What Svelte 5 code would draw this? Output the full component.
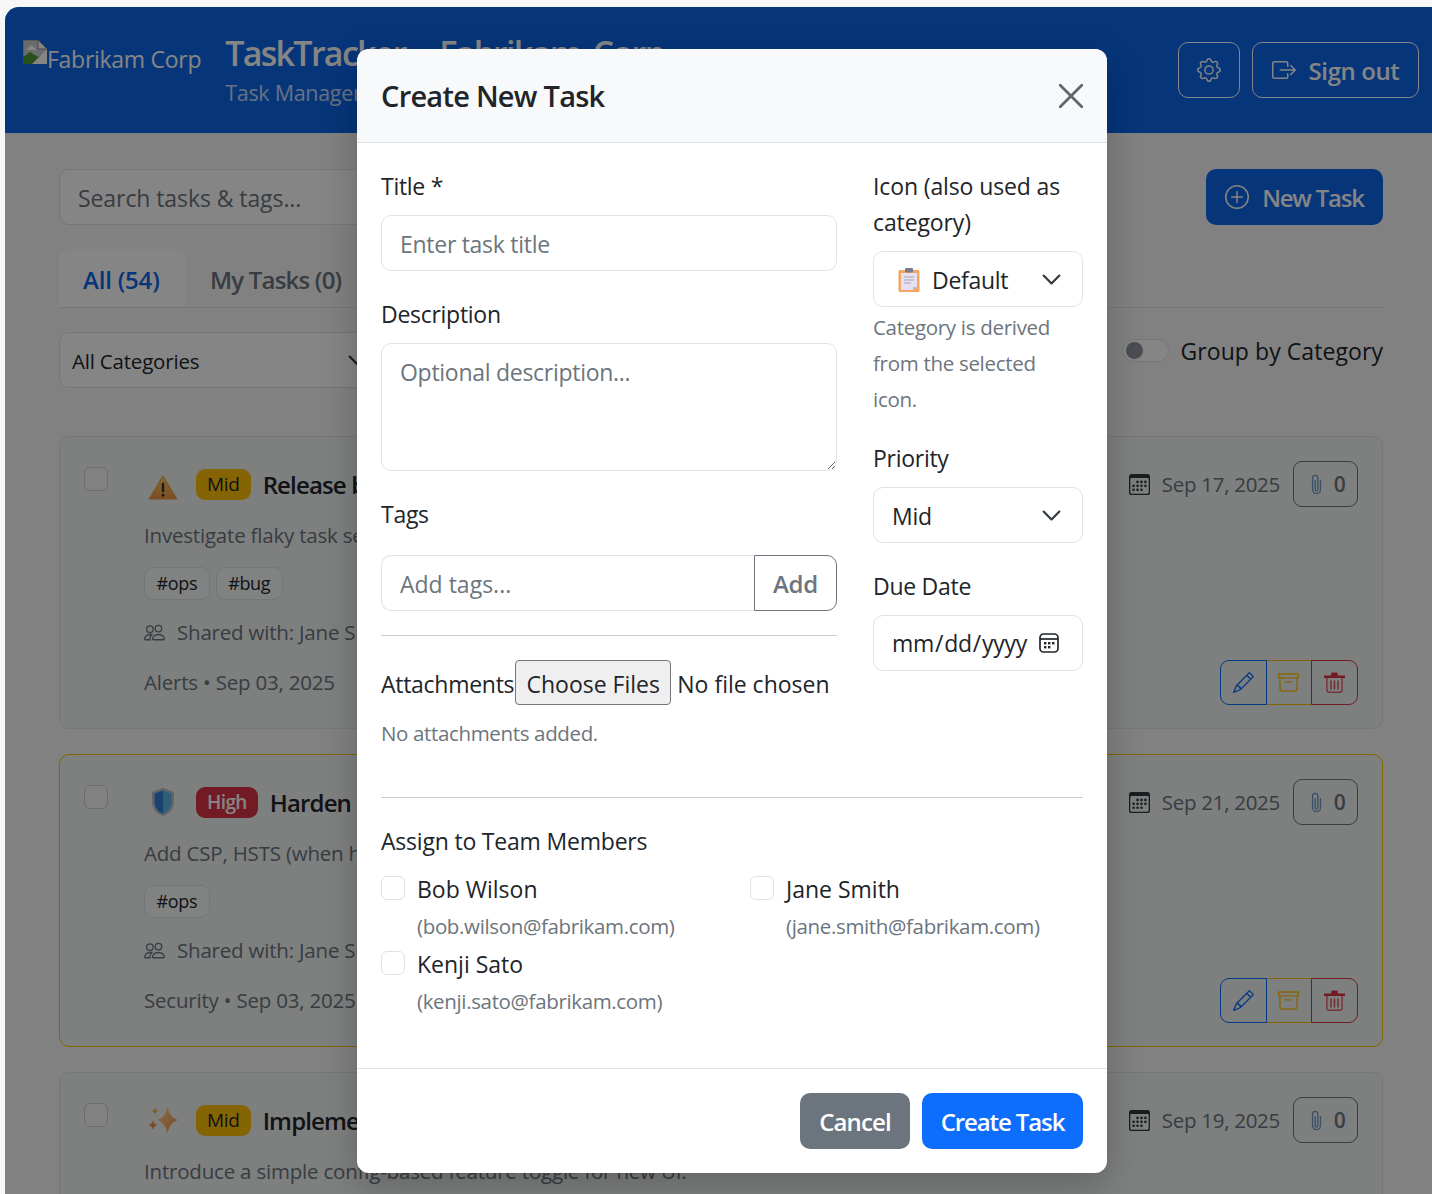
<script>
  const tasks = [
    { icon: 'warn', pr: 'Mid', title: 'Release blockers triage', desc: 'Investigate flaky task search results in production.', tags: ['#ops', '#bug'], meta: 'Alerts • Sep 03, 2025', due: 'Sep 17, 2025', high: false },
    { icon: 'shield', pr: 'High', title: 'Harden security headers', desc: 'Add CSP, HSTS (when hosted over TLS) and referrer policy.', tags: ['#ops'], meta: 'Security • Sep 03, 2025', due: 'Sep 21, 2025', high: true },
    { icon: 'spark', pr: 'Mid', title: 'Implement feature flags', desc: 'Introduce a simple config-based feature toggle for new UI.', tags: ['#ui'], meta: 'Feature • Sep 03, 2025', due: 'Sep 19, 2025', high: false }
  ];
  const members = [
    { name: 'Bob Wilson', email: '(bob.wilson@fabrikam.com)' },
    { name: 'Jane Smith', email: '(jane.smith@fabrikam.com)' },
    { name: 'Kenji Sato', email: '(kenji.sato@fabrikam.com)' }
  ];
</script>

<div class="shell">
  <header class="top">
    <div class="brand">
      <span class="logo">
        <svg class="broken" viewBox="0 0 24 24" width="24" height="24">
          <path d="M0 0h15l9 9v15H0z" fill="#c9cdd2" stroke="#8a8f96" stroke-width="1"/>
          <path d="M0 24V17l7-5 8 5 9-5v12z" fill="#4f9a36"/>
          <path d="M3 10l5-5 6 5z" fill="#fff"/>
          <path d="M15 0v9h9z" fill="#fff" stroke="#8a8f96"/>
          <path d="M24 9L9 24h15z" fill="#fff"/>
        </svg>Fabrikam Corp
      </span>
      <div class="brand-text">
        <div class="app-title">TaskTracker - Fabrikam Corp</div>
        <div class="app-sub">Task Management Portal</div>
      </div>
    </div>
    <div class="top-actions">
      <button class="ghost gear" aria-label="Settings">
        <svg viewBox="0 0 16 16" width="24" height="24" fill="currentColor"><path d="M8 4.754a3.246 3.246 0 1 0 0 6.492 3.246 3.246 0 0 0 0-6.492zM5.754 8a2.246 2.246 0 1 1 4.492 0 2.246 2.246 0 0 1-4.492 0z"/><path d="M9.796 1.343c-.527-1.79-3.065-1.79-3.592 0l-.094.319a.873.873 0 0 1-1.255.52l-.292-.16c-1.64-.892-3.433.902-2.54 2.541l.159.292a.873.873 0 0 1-.52 1.255l-.319.094c-1.79.527-1.79 3.065 0 3.592l.319.094a.873.873 0 0 1 .52 1.255l-.16.292c-.892 1.64.901 3.434 2.541 2.54l.292-.159a.873.873 0 0 1 1.255.52l.094.319c.527 1.79 3.065 1.79 3.592 0l.094-.319a.873.873 0 0 1 1.255-.52l.292.16c1.64.893 3.434-.902 2.54-2.541l-.159-.292a.873.873 0 0 1 .52-1.255l.319-.094c1.79-.527 1.79-3.065 0-3.592l-.319-.094a.873.873 0 0 1-.52-1.255l.16-.292c.893-1.64-.902-3.433-2.541-2.54l-.292.159a.873.873 0 0 1-1.255-.52l-.094-.319zm-2.633.283c.246-.835 1.428-.835 1.674 0l.094.319a1.873 1.873 0 0 0 2.693 1.115l.291-.16c.764-.415 1.6.42 1.184 1.185l-.159.292a1.873 1.873 0 0 0 1.116 2.692l.318.094c.835.246.835 1.428 0 1.674l-.319.094a1.873 1.873 0 0 0-1.115 2.693l.16.291c.415.764-.42 1.6-1.185 1.184l-.291-.159a1.873 1.873 0 0 0-2.693 1.116l-.094.318c-.246.835-1.428.835-1.674 0l-.094-.319a1.873 1.873 0 0 0-2.692-1.115l-.292.16c-.764.415-1.6-.42-1.184-1.185l.159-.291A1.873 1.873 0 0 0 1.945 8.93l-.319-.094c-.835-.246-.835-1.428 0-1.674l.319-.094A1.873 1.873 0 0 0 3.06 4.377l-.16-.292c-.415-.764.42-1.6 1.185-1.184l.292.159a1.873 1.873 0 0 0 2.692-1.115l.094-.319z"/></svg>
      </button>
      <button class="ghost signout">
        <svg viewBox="0 0 16 16" width="24" height="24" fill="currentColor"><path d="M10 12.5a.5.5 0 0 1-.5.5h-8a.5.5 0 0 1-.5-.5v-9a.5.5 0 0 1 .5-.5h8a.5.5 0 0 1 .5.5v2a.5.5 0 0 0 1 0v-2A1.5 1.5 0 0 0 9.5 2h-8A1.5 1.5 0 0 0 0 3.5v9A1.5 1.5 0 0 0 1.5 14h8a1.5 1.5 0 0 0 1.5-1.5v-2a.5.5 0 0 0-1 0v2z"/><path d="M15.854 8.354a.5.5 0 0 0 0-.708l-3-3a.5.5 0 0 0-.708.708L14.293 7.5H5.5a.5.5 0 0 0 0 1h8.793l-2.147 2.146a.5.5 0 0 0 .708.708l3-3z"/></svg>
        Sign out
      </button>
    </div>
  </header>

  <main class="page">
    <div class="search-row">
      <div class="search">Search tasks &amp; tags...</div>
      <button class="new-task">
        <svg viewBox="0 0 16 16" width="24" height="24" fill="currentColor"><path d="M8 15A7 7 0 1 1 8 1a7 7 0 0 1 0 14zm0 1A8 8 0 1 0 8 0a8 8 0 0 0 0 16z"/><path d="M8 4a.5.5 0 0 1 .5.5v3h3a.5.5 0 0 1 0 1h-3v3a.5.5 0 0 1-1 0v-3h-3a.5.5 0 0 1 0-1h3v-3A.5.5 0 0 1 8 4z"/></svg>
        New Task
      </button>
    </div>
    <nav class="tabs">
      <span class="tab active">All (54)</span>
      <span class="tab other">My Tasks (0)</span>
    </nav>
    <div class="filters">
      <div class="cat-select">All Categories
        <svg class="chev" viewBox="0 0 16 16" width="21" height="21"><path d="m2 5 6 6 6-6" fill="none" stroke="#343a40" stroke-width="1.7" stroke-linecap="round" stroke-linejoin="round"/></svg>
      </div>
      <div class="group-toggle"><span class="switch"><span class="knob"></span></span>Group by Category</div>
    </div>

    {#each tasks as t}
      <article class="card" class:warn={t.high}>
        <span class="check dim"></span>
        <div class="card-main">
          <div class="title-row">
            <span class="emoji">
              {#if t.icon === 'warn'}
                <svg class="tri" viewBox="0 0 30 26" width="30" height="25"><defs><linearGradient id="wg" x1="0" y1="0" x2="0" y2="1"><stop offset="0" stop-color="#f8cf62"/><stop offset="1" stop-color="#ee9240"/></linearGradient></defs><path d="M15 1 L29.5 25 H0.5 Z" fill="url(#wg)" stroke="#ea9a48" stroke-linejoin="round"/><rect x="13.8" y="8" width="2.4" height="10" rx="1" fill="#333"/><circle cx="15" cy="21" r="1.5" fill="#333"/></svg>
              {:else if t.icon === 'shield'}
                <svg viewBox="0 0 24 30" width="24" height="30"><path d="M12 1 L23 5 V15 C23 22 18 27 12 29 C6 27 1 22 1 15 V5 Z" fill="#b9bec6"/><path d="M12 3.5 L3.5 6.5 V15 C3.5 20.5 7.5 25 12 26.8 Z" fill="#2f7fd6"/><path d="M12 3.5 L20.5 6.5 V15 C20.5 20.5 16.5 25 12 26.8 Z" fill="#57b6e4"/></svg>
              {:else}
                <svg viewBox="0 0 30 28" width="30" height="28"><defs><linearGradient id="sg" x1="0" y1="0" x2="1" y2="1"><stop offset="0" stop-color="#ffd98a"/><stop offset="1" stop-color="#f28a4a"/></linearGradient></defs><path d="M19.5 1 C21.5 9 24 12 30 14 C24 16 21.5 19 19.5 27 C17.5 19 15 16 9 14 C15 12 17.5 9 19.5 1Z" fill="url(#sg)"/><path d="M7 1 C7.6 3.6 8.4 4.4 11 5 C8.4 5.6 7.6 6.4 7 9 C6.4 6.4 5.6 5.6 3 5 C5.6 4.4 6.4 3.6 7 1Z" fill="#f7b858"/><path d="M5 14 C5.8 17.2 6.8 18.2 10 19 C6.8 19.8 5.8 20.8 5 24 C4.2 20.8 3.2 19.8 0 19 C3.2 18.2 4.2 17.2 5 14Z" fill="#f0903f"/></svg>
              {/if}
            </span>
            <span class="badge" class:high={t.pr === 'High'}>{t.pr}</span>
            <span class="task-title">{t.title}</span>
          </div>
          <div class="desc">{t.desc}</div>
          <div class="tags">{#each t.tags as tag}<span class="tag">{tag}</span>{/each}</div>
          <div class="shared">
            <svg viewBox="0 0 16 16" width="21" height="21" fill="currentColor"><path d="M15 14s1 0 1-1-1-4-5-4-5 3-5 4 1 1 1 1h8Zm-7.978-1A.261.261 0 0 1 7 12.996c.001-.264.167-1.03.76-1.72C8.312 10.629 9.282 10 11 10c1.717 0 2.687.63 3.24 1.276.593.69.758 1.457.76 1.72l-.008.002a.274.274 0 0 1-.014.002H7.022ZM11 7a2 2 0 1 0 0-4 2 2 0 0 0 0 4Zm3-2a3 3 0 1 1-6 0 3 3 0 0 1 6 0ZM6.936 9.28a5.88 5.88 0 0 0-1.23-.247A7.35 7.35 0 0 0 5 9c-4 0-5 3-5 4 0 .667.333 1 1 1h4.216A2.238 2.238 0 0 1 5 13c0-1.01.377-2.042 1.09-2.904.243-.294.526-.569.846-.816ZM4.92 10A5.493 5.493 0 0 0 4 13H1c0-.26.164-1.03.76-1.724.545-.636 1.492-1.256 3.16-1.275ZM1.5 5.5a3 3 0 1 1 6 0 3 3 0 0 1-6 0Zm3-2a2 2 0 1 0 0 4 2 2 0 0 0 0-4Z"/></svg>
            Shared with: Jane Smith
          </div>
          <div class="meta">{t.meta}</div>
        </div>
        <div class="card-side">
          <div class="due">
            <svg viewBox="0 0 16 16" width="21" height="21" fill="#343a40"><path d="M14 0H2a2 2 0 0 0-2 2v12a2 2 0 0 0 2 2h12a2 2 0 0 0 2-2V2a2 2 0 0 0-2-2zM1 3.857C1 3.384 1.448 3 2 3h12c.552 0 1 .384 1 .857v10.286c0 .473-.448.857-1 .857H2c-.552 0-1-.384-1-.857V3.857z"/><path d="M6.5 7a1 1 0 1 0 0-2 1 1 0 0 0 0 2zm3 0a1 1 0 1 0 0-2 1 1 0 0 0 0 2zm3 0a1 1 0 1 0 0-2 1 1 0 0 0 0 2zm-9 3a1 1 0 1 0 0-2 1 1 0 0 0 0 2zm3 0a1 1 0 1 0 0-2 1 1 0 0 0 0 2zm3 0a1 1 0 1 0 0-2 1 1 0 0 0 0 2zm3 0a1 1 0 1 0 0-2 1 1 0 0 0 0 2zm-9 3a1 1 0 1 0 0-2 1 1 0 0 0 0 2zm3 0a1 1 0 1 0 0-2 1 1 0 0 0 0 2zm3 0a1 1 0 1 0 0-2 1 1 0 0 0 0 2z"/></svg>
            <span class="due-text">{t.due}</span>
            <button class="attach">
              <svg viewBox="0 0 16 16" width="21" height="21" fill="#6c9ac4"><path d="M4.5 3a2.5 2.5 0 0 1 5 0v9a1.5 1.5 0 0 1-3 0V5a.5.5 0 0 1 1 0v7a.5.5 0 0 0 1 0V3a1.5 1.5 0 1 0-3 0v9a2.5 2.5 0 0 0 5 0V5a.5.5 0 0 1 1 0v7a3.5 3.5 0 1 1-7 0V3z"/></svg>
              0
            </button>
          </div>
          <div class="acts">
            <button class="act edit" aria-label="Edit"><svg viewBox="0 0 16 16" width="21" height="21" fill="currentColor"><path d="M12.146.146a.5.5 0 0 1 .708 0l3 3a.5.5 0 0 1 0 .708l-10 10a.5.5 0 0 1-.168.11l-5 2a.5.5 0 0 1-.65-.65l2-5a.5.5 0 0 1 .11-.168l10-10zM11.207 2.5 13.5 4.793 14.793 3.5 12.5 1.207 11.207 2.5zm1.586 3L10.5 3.207 4 9.707V10h.5a.5.5 0 0 1 .5.5v.5h.5a.5.5 0 0 1 .5.5v.5h.293l6.5-6.5zm-9.761 5.175-.106.106-1.528 3.821 3.821-1.528.106-.106A.5.5 0 0 1 5 12.5V12h-.5a.5.5 0 0 1-.5-.5V11h-.5a.5.5 0 0 1-.468-.325z"/></svg></button>
            <button class="act arch" aria-label="Archive"><svg viewBox="0 0 16 16" width="21" height="21" fill="currentColor"><path d="M0 2a1 1 0 0 1 1-1h14a1 1 0 0 1 1 1v2a1 1 0 0 1-1 1v7.5a2.5 2.5 0 0 1-2.5 2.5h-9A2.5 2.5 0 0 1 1 12.5V5a1 1 0 0 1-1-1V2zm2 3v7.5A1.5 1.5 0 0 0 3.5 14h9a1.5 1.5 0 0 0 1.5-1.5V5H2zm13-3H1v2h14V2zM5 7.5a.5.5 0 0 1 .5-.5h5a.5.5 0 0 1 0 1h-5a.5.5 0 0 1-.5-.5z"/></svg></button>
            <button class="act del" aria-label="Delete"><svg viewBox="0 0 16 16" width="21" height="21"><path d="M0 2.6h16v2H0z M5.5 1.4 6 .4h4l.5 1v1.4h-5z" fill="currentColor"/><path d="M2.2 4.4v9.4c0 1 .7 1.7 1.7 1.7h8.2c1 0 1.7-.7 1.7-1.7V4.4" fill="none" stroke="currentColor" stroke-width="1.1" opacity=".75"/><path d="M5.3 6.5v6.8M8 6.5v6.8M10.7 6.5v6.8" stroke="currentColor" stroke-width="1.1" opacity=".85"/></svg></button>
          </div>
        </div>
      </article>
    {/each}
  </main>

  <div class="backdrop"></div>

  <section class="modal">
    <div class="m-head">
      <h2>Create New Task</h2>
      <button class="x" aria-label="Close">
        <svg viewBox="0 0 24 24" width="24" height="24"><path d="M1 1 23 23M23 1 1 23" stroke="#62666a" stroke-width="2.8" stroke-linecap="round"/></svg>
      </button>
    </div>
    <div class="m-body">
      <div class="form-grid">
        <div class="col-left">
          <label class="lbl" for="t">Title *</label>
          <input id="t" class="ctl" placeholder="Enter task title" />
          <label class="lbl gap" for="d">Description</label>
          <textarea id="d" class="ctl area" placeholder="Optional description..."></textarea>
          <label class="lbl gap tags-lbl" for="g">Tags</label>
          <div class="group">
            <input id="g" class="ctl" placeholder="Add tags..." />
            <button class="add">Add</button>
          </div>
          <hr class="rule" />
          <div class="attach-row">
            <label for="f">Attachments</label><input id="f" class="file" type="file" multiple />
          </div>
          <div class="no-att">No attachments added.</div>
        </div>
        <div class="col-right">
          <div class="lbl icon-lbl">Icon (also used as category)</div>
          <div class="ctl fake">
            <svg viewBox="0 0 22 24" width="22" height="24"><rect x="0.5" y="2" width="21" height="22" rx="1.5" fill="#f0a766"/><path d="M3 5h16v14l-4 3H3z" fill="#e6e0f0"/><path d="M19 19l-4 3v-3z" fill="#bdb4cf"/><rect x="7" y="0" width="8" height="4.5" rx="1" fill="#7f7a8a"/><path d="M6 9h10M6 12h10M6 15h7" stroke="#a8a2b4" stroke-width="1.2"/></svg>
            <span>Default</span>
            <svg class="chev-m" viewBox="0 0 16 16" width="21" height="21"><path d="m2 5 6 6 6-6" fill="none" stroke="#343a40" stroke-width="1.7" stroke-linecap="round" stroke-linejoin="round"/></svg>
          </div>
          <div class="help">Category is derived from the selected icon.</div>
          <div class="lbl prio">Priority</div>
          <div class="ctl fake">
            <span>Mid</span>
            <svg class="chev-m" viewBox="0 0 16 16" width="21" height="21"><path d="m2 5 6 6 6-6" fill="none" stroke="#343a40" stroke-width="1.7" stroke-linecap="round" stroke-linejoin="round"/></svg>
          </div>
          <label class="lbl gap" for="dd">Due Date</label>
          <div class="date-wrap">
            <input id="dd" class="ctl date" type="date" />
            <svg class="date-ic" viewBox="0 0 20 20" width="20" height="20" fill="none"><rect x="1" y="1" width="18" height="18" rx="3.5" stroke="#212529" stroke-width="1.7"/><path d="M1 6h18" stroke="#212529" stroke-width="1.7"/><g fill="#212529"><rect x="5" y="9" width="2.4" height="2.4"/><rect x="9" y="9" width="2.4" height="2.4"/><rect x="13" y="9" width="2.4" height="2.4"/><rect x="5" y="13" width="2.4" height="2.4"/><rect x="9" y="13" width="2.4" height="2.4"/></g></svg>
          </div>
        </div>
      </div>
      <hr class="rule wide" />
      <div class="assign-lbl">Assign to Team Members</div>
      <div class="members">
        {#each members as m}
          <div class="member">
            <span class="check"></span>
            <div>
              <div class="m-name">{m.name}</div>
              <div class="m-mail">{m.email}</div>
            </div>
          </div>
        {/each}
      </div>
    </div>
    <div class="m-foot">
      <button class="btn cancel">Cancel</button>
      <button class="btn create">Create Task</button>
    </div>
  </section>
</div>

<style>
  :global(body) { margin: 0; background: #f7f7f7; overflow: hidden; }
  .shell {
    --fam: "Open Sans", "Noto Sans", sans-serif;
    --blue: #0c67ea;
    position: relative; margin: 7px 0 0 5px; height: 1187px; overflow: hidden;
    border-top-left-radius: 14px; background: #f7f8f9; color: #212529;
    font-family: var(--fam); font-size: 23px; letter-spacing: -0.28px; line-height: 36px;
  }
  button, input, textarea { font-family: inherit; letter-spacing: inherit; }
  svg { flex: none; display: block; }

  .top { height: 126px; background: var(--blue); color: #fff; display: flex; justify-content: space-between; padding: 35px 13px 0 18px; box-sizing: border-box; }
  .brand { display: flex; gap: 24px; }
  .logo { display: flex; align-items: flex-start; height: 36px; line-height: 34px; }
  .broken { margin-top: -2px; }
  .brand-text { margin-top: -13px; }
  .app-title { font-size: 34px; font-weight: 600; line-height: 48px; letter-spacing: -1.7px; word-spacing: 5px; white-space: nowrap; }
  .app-sub { font-size: 21.5px; line-height: 30px; opacity: .75; margin-top: 1px; letter-spacing: -0.3px; white-space: nowrap; }
  .top-actions { display: flex; gap: 12px; }
  .ghost { height: 56px; border: 1px solid #fff; border-radius: 10px; background: transparent; color: #fff; display: flex; align-items: center; justify-content: center; font-size: 24px; font-weight: 600; gap: 13px; padding: 0; box-sizing: border-box; letter-spacing: -0.4px; }
  .gear { width: 62px; }
  .signout { width: 167px; }

  .page { padding: 36px 49px 0 54px; isolation: isolate; }
  .search-row { display: flex; justify-content: space-between; gap: 24px; }
  .search { width: 900px; height: 56px; box-sizing: border-box; border: 1px solid #dee2e6; border-radius: 10px; padding: 10px 18px; color: #6c757d; background: #fff; letter-spacing: -0.08px; }
  .new-task { width: 177px; height: 56px; border: 0; border-radius: 10px; background: var(--blue); color: #fff; font-size: 24px; font-weight: 600; display: flex; align-items: center; justify-content: center; gap: 13px; padding: 0; letter-spacing: -1.2px; }
  .tabs { margin-top: 24px; display: flex; border-bottom: 1px solid #dee2e6; height: 58px; }
  .tab { width: 127px; height: 58px; box-sizing: border-box; padding: 13px 24px; font-size: 24px; font-weight: 600; color: #6c757d; border-radius: 10px 10px 0 0; white-space: nowrap; letter-spacing: -0.2px; }
  .tab.other { letter-spacing: -0.8px; }
  .tab.active { color: var(--blue); background: #fff; }
  .filters { margin-top: 24px; height: 56px; display: flex; justify-content: space-between; }
  .cat-select { position: relative; width: 330px; height: 56px; box-sizing: border-box; border: 1px solid #dee2e6; border-radius: 10px; padding: 10px 12px; font-size: 20.5px; letter-spacing: -0.2px; background: #fff; }
  .chev { position: absolute; right: 20px; top: 17px; }
  .group-toggle { display: flex; align-items: flex-start; gap: 12px; padding-top: 1px; letter-spacing: 0.07px; }
  .switch { width: 47px; height: 23px; margin-top: 6px; border-radius: 12px; border: 1px solid #dee2e6; box-sizing: border-box; position: relative; background: #fff; }
  .knob { position: absolute; left: 3px; top: 2px; width: 17px; height: 17px; border-radius: 50%; background: #8f959b; }

  .card { height: 293px; box-sizing: border-box; margin-top: 25px; border: 1px solid #dee2e6; border-radius: 10px; padding: 24px 24px 23px; display: flex; gap: 36px; background: #f2f3f4; }
  .card:first-of-type { margin-top: 48px; }
  .card.warn { border-color: #ffc107; }
  .check { width: 24px; height: 24px; box-sizing: border-box; border: 1px solid #dee2e6; border-radius: 6px; background: #fff; flex: none; display: block; margin-top: 6px; }
  .check.dim { border-color: #cfd2d6; background: #f7f7f7; }
  .card-main { flex: 1; min-width: 0; }
  .title-row { height: 46px; display: flex; align-items: center; white-space: nowrap; }
  .emoji { width: 40px; margin-right: 12px; display: flex; justify-content: center; box-sizing: border-box; padding-right: 2px; }
  .tri { margin-top: 7px; }
  .badge { height: 31px; line-height: 31px; padding: 0 11px; border-radius: 9px; background: #ffc107; color: #212529; font-size: 19px; font-weight: 500; letter-spacing: -0.3px; }
  .badge.high { background: #dc3545; color: #fff; font-weight: 600; letter-spacing: -0.6px; }
  .task-title { margin-left: 12px; font-size: 24px; font-weight: 600; color: #212529; letter-spacing: -0.85px; position: relative; top: 1px; }
  .desc { margin-top: 10px; font-size: 20.5px; letter-spacing: -0.2px; color: #6c757d; white-space: nowrap; }
  .tags { margin-top: 14px; display: flex; gap: 6px; height: 33px; }
  .tag { height: 33px; box-sizing: border-box; line-height: 31px; border: 1px solid #dee2e6; border-radius: 9px; padding: 0 11.5px; font-size: 18px; font-weight: 500; background: #f8f9fa; letter-spacing: -0.35px; }
  .shared { margin-top: 14px; display: flex; align-items: center; gap: 12px; font-size: 20.5px; letter-spacing: -0.2px; color: #6c757d; white-space: nowrap; }
  .meta { margin-top: 14px; font-size: 20.5px; letter-spacing: -0.2px; color: #6c757d; white-space: nowrap; }
  .card-side { display: flex; flex-direction: column; justify-content: space-between; align-items: flex-end; }
  .due { display: flex; align-items: center; gap: 12px; height: 46px; font-size: 20.5px; letter-spacing: -0.28px; color: #6c757d; white-space: nowrap; }
  .due-text { margin-right: 1px; }
  .attach { width: 65px; height: 46px; box-sizing: border-box; padding: 0; border: 1px solid #6c757d; border-radius: 9px; background: transparent; color: #6c757d; font-size: 21px; font-weight: 600; display: flex; align-items: center; justify-content: center; gap: 7px; }
  .acts { display: flex; height: 45px; }
  .act { width: 46.7px; height: 45px; box-sizing: border-box; padding: 0; background: transparent; display: flex; align-items: center; justify-content: center; border: 1px solid; margin-left: -1px; }
  .edit { color: #0d6efd; border-radius: 9px 0 0 9px; position: relative; z-index: 1; }
  .arch { color: #ffc107; }
  .del { color: #dc3545; border-radius: 0 9px 9px 0; }

  .backdrop { position: absolute; inset: 0; background: rgba(0,0,0,.48); }

  .modal { position: absolute; left: 352px; top: 42px; width: 750px; background: #fff; border-radius: 12px; overflow: hidden; box-shadow: 0 12px 36px rgba(0,0,0,.22); }
  .m-head { height: 94px; box-sizing: border-box; background: #f8f9fa; border-bottom: 1px solid #dee2e6; display: flex; align-items: center; justify-content: space-between; padding: 0 24px; }
  h2 { margin: 0; font-size: 29px; font-weight: 600; letter-spacing: -0.75px; }
  .x { border: 0; background: none; padding: 0; }
  .m-body { padding: 26px 24px 0; }
  .form-grid { display: grid; grid-template-columns: 456px 210px; gap: 36px; }
  .lbl { display: block; margin-bottom: 10px; line-height: 34px; padding-bottom: 2px; }
  .icon-lbl { line-height: 36px; padding-bottom: 0; margin-top: -1px; margin-bottom: 11px; letter-spacing: -0.12px; }
  .gap { margin-top: 26px; }
  .tags-lbl { margin-bottom: 22px; }
  .ctl { display: block; width: 100%; height: 56px; box-sizing: border-box; border: 1px solid #dee2e6; border-radius: 10px; padding: 2px 18px 0; font-size: 23px; color: #212529; background: #fff; }
  .ctl::placeholder { color: #6c757d; opacity: 1; }
  .area { height: 128px; padding-top: 10px; line-height: 36px; resize: vertical; }
  .group { display: flex; height: 56px; }
  .group .ctl { flex: 1; border-right: 0; border-radius: 10px 0 0 10px; letter-spacing: 0; }
  .add { width: 83px; box-sizing: border-box; padding: 0; border: 1px solid #6c757d; border-radius: 0 10px 10px 0; background: #fff; color: #6c757d; font-size: 24px; font-weight: 600; }
  .rule { border: 0; border-top: 1px solid #ccc; margin: 24px 0; }
  .wide { margin: 46px 0 26px; }
  .attach-row { display: flex; align-items: center; height: 45px; white-space: nowrap; }
  .attach-row label { padding: 3px 1px 0 0; }
  .file { font-size: 23px; color: #212529; width: 321px; letter-spacing: 0; }
  .file::file-selector-button { height: 45px; width: 156px; padding: 3px 0 0; margin-right: 6px; border: 1px solid #767676; border-radius: 4px; background: #efefef; color: #212529; font: inherit; letter-spacing: 0; }
  .no-att { margin-top: 10px; font-size: 20.5px; letter-spacing: -0.35px; line-height: 36px; color: #6c757d; }
  .fake { display: flex; align-items: center; gap: 12px; position: relative; padding: 2px 18px 0; }
  .fake span { display: block; }
  .fake svg:first-child { margin-left: 6px; }
  .chev-m { position: absolute; right: 20px; top: 17px; margin: 0 !important; }
  .help { margin-top: 2px; padding-right: 8px; font-size: 20.5px; letter-spacing: -0.3px; line-height: 36px; color: #6c757d; }
  .prio { margin-top: 24px; }
  .date-wrap { position: relative; }
  .date { padding: 0 17px; }
  .date::-webkit-calendar-picker-indicator { opacity: 0; }
  .date-ic { position: absolute; left: 166px; top: 18px; pointer-events: none; }
  .assign-lbl { height: 36px; line-height: 34px; letter-spacing: -0.2px; }
  .members { margin-top: 12px; display: grid; grid-template-columns: 333px 333px; column-gap: 36px; row-gap: 3px; }
  .member { display: flex; gap: 12px; }
  .member .check { margin-top: 4px; }
  .m-name { height: 36px; line-height: 34px; letter-spacing: 0; }
  .m-mail { font-size: 20.5px; letter-spacing: -0.35px; line-height: 36px; color: #6c757d; white-space: nowrap; }
  .m-foot { margin-top: 49px; border-top: 1px solid #dee2e6; padding: 24px; display: flex; justify-content: flex-end; gap: 12px; }
  .btn { height: 56px; border: 0; border-radius: 10px; padding: 0; color: #fff; font-size: 24px; font-weight: 600; }
  .cancel { width: 110px; background: #6c757d; letter-spacing: -0.9px; }
  .create { width: 161px; background: #0d6efd; letter-spacing: -1.1px; }
</style>
